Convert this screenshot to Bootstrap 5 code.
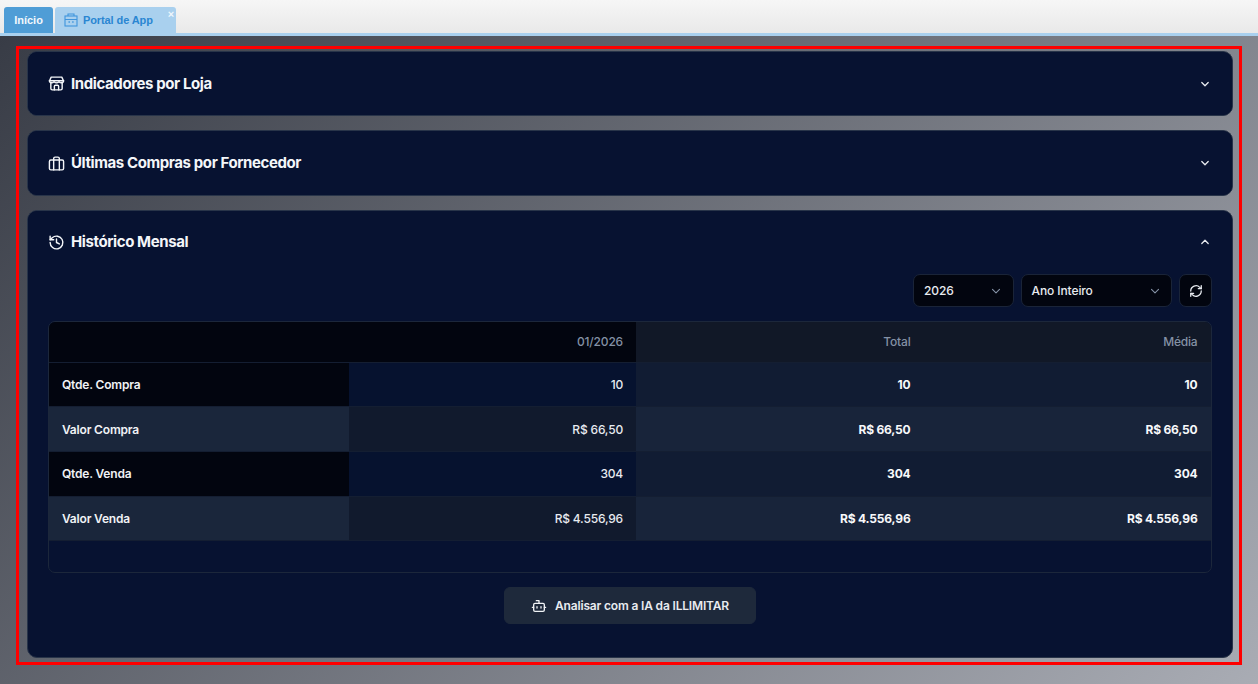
<!DOCTYPE html>
<html lang="pt-BR">
<head>
<meta charset="utf-8">
<title>Portal de App</title>
<link href="https://cdn.jsdelivr.net/npm/bootstrap@5.3.0/dist/css/bootstrap.min.css" rel="stylesheet">
<style>
html,body{height:100%}
body{width:1258px;height:684px;overflow:hidden;font-family:Inter,"Liberation Sans",sans-serif;background:#fff}
.tabstrip{height:36px;background:linear-gradient(#f6f6f6,#e9e9e9);border-bottom:3px solid #a9d0ee;padding:7px 0 0 4px;gap:1px}
.tabitem{height:26px;font:700 11px "Liberation Sans",sans-serif;border-radius:3px 3px 0 0;position:relative;gap:5px}
.tab-home{width:49px;background:#4f9dd6;color:#f2f8fc;justify-content:center}
.tab-app{width:121px;background:#a9d0ee;color:#2a86d2;padding-left:9px;margin-left:1px;letter-spacing:-.1px}
.tab-close{position:absolute;right:2px;top:0;font:700 11px/14px "Liberation Sans",sans-serif;color:#eef6fc}
.stage{height:648px;padding:10px 16px 0;background:linear-gradient(135deg,#383c46 0%,#a9acb4 100%)}
.redframe{height:619px;border:3px solid #fe0000;padding:2px 6px 0 8px}
.panel-stack{--bs-accordion-bg:#071231;--bs-accordion-border-color:#283449;--bs-accordion-border-radius:10px;--bs-accordion-inner-border-radius:9px;display:flex;flex-direction:column;gap:14px}
.panel-stack .accordion-item{background:#071231;border:1px solid #283449;border-radius:10px;overflow:hidden}
.panel-stack .accordion-button{height:63.4px;background:#071231;color:#f4f6f9;font:700 15px Inter,sans-serif;letter-spacing:-.4px;padding:0 20px;box-shadow:none;gap:6px}
.panel-stack .accordion-button::after{display:none}
.title-up{margin-bottom:2px}
.chev{margin-left:auto;margin-right:1px}
.filters{gap:7px;margin:0 20px 14px 0;padding-top:0}
.pick{height:33px;background:#02050f;border:1px solid #1a2438;border-radius:7px;color:#e8ebf0;font:500 12px Inter,sans-serif;letter-spacing:-.1px;padding:0 10.5px 0 10px;justify-content:space-between}
.pick-year{width:100.5px}
.pick-period{width:151.5px}
.pick-refresh{width:33px;padding:0;justify-content:center}
.datagrid{margin:0 20px;height:252px;border:1px solid #1c273b;border-radius:7px;overflow:hidden;background:#071231}
.datagrid .table{--bs-table-bg:transparent;--bs-table-color:#e8ebf0;margin:0;table-layout:fixed;width:100%;font:500 12px Inter,sans-serif;letter-spacing:-.18px}
.datagrid .table td,.datagrid .table th{border:0;border-bottom:1px solid #141e32;padding:0 13.5px;vertical-align:middle;text-align:right;color:#e8ebf0;box-shadow:none}
.datagrid .table tr>:nth-child(2){padding-right:13px}
.col-lead{width:300px}.col-month{width:287px}.col-total{width:288px}.col-avg{width:287px}
.datagrid thead th{height:40px;font-weight:500;color:#8491a5!important;background:#02050f}
.datagrid .head-sum{background:#111827}
.datagrid tbody tr{height:44.7px}
.datagrid .table tbody th{text-align:left;padding-left:13px;font-weight:600;color:#f0f2f5}
.datagrid .table .sum{font-weight:700;color:#f8f9fb}
.odd-row th{background:#02050f}
.odd-row td{background:#06122f}
.odd-row .sum{background:#111c33}
.even-row th{background:#1a263b}
.even-row td{background:#111a2d}
.even-row .sum{background:#18243a}
.ai-wrap{padding:14px 0 32.5px}
.ai-btn{--bs-btn-bg:#1e293b;--bs-btn-border-color:#1e293b;--bs-btn-color:#e8ebf0;--bs-btn-hover-bg:#1e293b;--bs-btn-hover-color:#e8ebf0;--bs-btn-hover-border-color:#1e293b;width:252px;height:37px;font:600 12px Inter,sans-serif;letter-spacing:-.17px;border-radius:6px;gap:8px;padding:0}
</style>
</head>
<body>
<div class="tabstrip d-flex align-items-start">
  <div class="tabitem tab-home d-flex align-items-center">Início</div>
  <div class="tabitem tab-app d-flex align-items-center">
    <svg width="14" height="14" viewBox="0 0 14 14" fill="none" stroke="#3f94dc" stroke-width="1.1"><rect x="1" y="3" width="12" height="10"/><path d="M1 6.500h12M4 3V1h6v2"/><path d="M4.500 9h1.400M8.200 9h1.400" stroke-width="1.400"/></svg>
    <span>Portal de App</span><span class="tab-close">×</span>
  </div>
</div>
<div class="stage">
  <div class="redframe">
    <div class="accordion panel-stack" id="panels">
      <div class="accordion-item">
        <button class="accordion-button collapsed" type="button" data-bs-toggle="collapse" data-bs-target="#p1">
          <svg width="17" height="17" viewBox="0 0 24 24" fill="none" stroke="#f4f6f9" stroke-width="2" stroke-linecap="round" stroke-linejoin="round"><path d="M4 10v9a2 2 0 0 0 2 2h12a2 2 0 0 0 2-2v-9"/><path d="M4.500 3h15L22 8.500a3 3 0 0 1-3 2.500 3.500 3.500 0 0 1-3.500-1.500A3.500 3.500 0 0 1 12 11a3.500 3.500 0 0 1-3.500-1.500A3.500 3.500 0 0 1 5 11a3 3 0 0 1-3-2.500z"/><path d="M2 8h20"/><path d="M9 21v-5a1.500 1.500 0 0 1 1.500-1.500h3A1.500 1.500 0 0 1 15 16v5"/></svg>
          <span>Indicadores por Loja</span>
          <svg class="chev" width="12" height="12" viewBox="0 0 12 12" fill="none" stroke="#e8ebf0" stroke-width="1.300" stroke-linecap="round" stroke-linejoin="round"><path d="M2.800 4.500 6 7.700l3.200-3.200"/></svg>
        </button>
        <div id="p1" class="accordion-collapse collapse" data-bs-parent="#panels"></div>
      </div>
      <div class="accordion-item">
        <button class="accordion-button collapsed" type="button" data-bs-toggle="collapse" data-bs-target="#p2">
          <svg width="17" height="17" viewBox="0 0 24 24" fill="none" stroke="#f4f6f9" stroke-width="2" stroke-linecap="round" stroke-linejoin="round"><rect x="2" y="7" width="20" height="14" rx="2"/><path d="M16 21V5a2 2 0 0 0-2-2h-4a2 2 0 0 0-2 2v16"/></svg>
          <span class="title-up">Últimas Compras por Fornecedor</span>
          <svg class="chev" width="12" height="12" viewBox="0 0 12 12" fill="none" stroke="#e8ebf0" stroke-width="1.300" stroke-linecap="round" stroke-linejoin="round"><path d="M2.800 4.500 6 7.700l3.200-3.200"/></svg>
        </button>
        <div id="p2" class="accordion-collapse collapse" data-bs-parent="#panels"></div>
      </div>
      <div class="accordion-item">
        <button class="accordion-button" type="button" data-bs-toggle="collapse" data-bs-target="#p3">
          <svg width="17" height="17" viewBox="0 0 24 24" fill="none" stroke="#f4f6f9" stroke-width="2" stroke-linecap="round" stroke-linejoin="round"><path d="M3 12a9 9 0 1 0 3-6.700L3 8"/><path d="M3 3v5h5"/><path d="M12 7v5l4 2"/></svg>
          <span class="title-up">Histórico Mensal</span>
          <svg class="chev" width="12" height="12" viewBox="0 0 12 12" fill="none" stroke="#e8ebf0" stroke-width="1.300" stroke-linecap="round" stroke-linejoin="round"><path d="M2.800 7.500 6 4.300l3.200 3.200"/></svg>
        </button>
        <div id="p3" class="accordion-collapse collapse show" data-bs-parent="#panels">
          <div class="filters d-flex justify-content-end">
            <div class="pick pick-year d-flex align-items-center"><span>2026</span><svg width="12" height="12" viewBox="0 0 12 12" fill="none" stroke="#8491a5" stroke-width="1.100" stroke-linecap="round" stroke-linejoin="round"><path d="M2.500 4.300 6 7.800l3.500-3.500"/></svg></div>
            <div class="pick pick-period d-flex align-items-center"><span>Ano Inteiro</span><svg width="12" height="12" viewBox="0 0 12 12" fill="none" stroke="#8491a5" stroke-width="1.100" stroke-linecap="round" stroke-linejoin="round"><path d="M2.500 4.300 6 7.800l3.500-3.500"/></svg></div>
            <div class="pick pick-refresh d-flex align-items-center"><svg width="14" height="14" viewBox="0 0 24 24" fill="none" stroke="#e8ebf0" stroke-width="2.200" stroke-linecap="round" stroke-linejoin="round"><path d="M3 12a9 9 0 0 1 15.500-6.200L21 8"/><path d="M21 3v5h-5"/><path d="M21 12a9 9 0 0 1-15.500 6.200L3 16"/><path d="M8 16H3v5"/></svg></div>
          </div>
          <div class="datagrid">
            <table class="table">
              <colgroup><col class="col-lead"><col class="col-month"><col class="col-total"><col class="col-avg"></colgroup>
              <thead><tr><th></th><th>01/2026</th><th class="head-sum">Total</th><th class="head-sum">Média</th></tr></thead>
              <tbody>
                <tr class="odd-row"><th>Qtde. Compra</th><td>10</td><td class="sum">10</td><td class="sum">10</td></tr>
                <tr class="even-row"><th>Valor Compra</th><td>R$ 66,50</td><td class="sum">R$ 66,50</td><td class="sum">R$ 66,50</td></tr>
                <tr class="odd-row"><th>Qtde. Venda</th><td>304</td><td class="sum">304</td><td class="sum">304</td></tr>
                <tr class="even-row"><th>Valor Venda</th><td>R$ 4.556,96</td><td class="sum">R$ 4.556,96</td><td class="sum">R$ 4.556,96</td></tr>
              </tbody>
            </table>
          </div>
          <div class="ai-wrap d-flex justify-content-center">
            <button type="button" class="btn ai-btn d-flex align-items-center justify-content-center">
              <svg width="16" height="16" viewBox="0 0 24 24" fill="none" stroke="#f0f2f5" stroke-width="2" stroke-linecap="round" stroke-linejoin="round"><path d="M12 8V4H8"/><rect x="4" y="8" width="16" height="12" rx="2"/><path d="M2 14h2M20 14h2M15 13v2M9 13v2"/></svg>
              Analisar com a IA da ILLIMITAR
            </button>
          </div>
        </div>
      </div>
    </div>
  </div>
</div>
<script src="https://cdn.jsdelivr.net/npm/bootstrap@5.3.0/dist/js/bootstrap.bundle.min.js"></script>
</body>
</html>
